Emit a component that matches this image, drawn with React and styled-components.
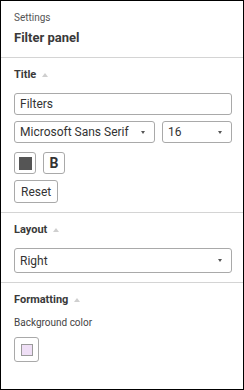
import React, { useState } from "react";
import styled, { createGlobalStyle } from "styled-components";

const GlobalStyle = createGlobalStyle`
  html, body {
    margin: 0;
    padding: 0;
    background: #ffffff;
  }
  * {
    box-sizing: border-box;
  }
`;

export default function App() {
  const [title, setTitle] = useState("Filters");
  const [font, setFont] = useState("Microsoft Sans Serif");
  const [size, setSize] = useState("16");
  const [layout, setLayout] = useState("Right");

  return (
    <>
      <GlobalStyle />
      <Panel>
        <Header>
          <Caption>Settings</Caption>
          <Heading>Filter panel</Heading>
        </Header>

        <Section>
          <SectionTitle>
            Title <Arrow />
          </SectionTitle>
          <TextInput value={title} onChange={(e) => setTitle(e.target.value)} />
          <Row>
            <Select value={font} onChange={setFont} width="141px" />
            <Select value={size} onChange={setSize} width="70px" />
          </Row>
          <Row gap="7px">
            <IconButton>
              <Swatch color="#555555" />
            </IconButton>
            <IconButton>
              <Bold>B</Bold>
            </IconButton>
          </Row>
          <TextButton>Reset</TextButton>
        </Section>

        <Section>
          <SectionTitle>
            Layout <Arrow />
          </SectionTitle>
          <Select value={layout} onChange={setLayout} width="100%" tall />
        </Section>

        <Section last>
          <SectionTitle>
            Formatting <Arrow />
          </SectionTitle>
          <Label>Background color</Label>
          <IconButton big>
            <Swatch color="#efdff6" light />
          </IconButton>
        </Section>
      </Panel>
    </>
  );
}

function Select({ value, width, tall }) {
  return (
    <SelectBox style={{ width }} tall={tall ? 1 : 0}>
      <span>{value}</span>
      <Caret />
    </SelectBox>
  );
}

const Panel = styled.div`
  width: 244px;
  height: 390px;
  border: 1px solid #000;
  background: #fff;
  font-family: Roboto, "Liberation Sans", Arial, sans-serif;
  color: #333;
  overflow: hidden;
`;

const Header = styled.div`
  padding: 10px 11px 11px 13px;
  border-bottom: 1px solid #d4d4d4;
`;

const Caption = styled.div`
  font-size: 10px;
  line-height: 13px;
  color: #555;
`;

const Heading = styled.div`
  margin-top: 5px;
  font-size: 13px;
  line-height: 17px;
  font-weight: 700;
  color: #3a3a3a;
`;

const Section = styled.div`
  padding: 10px 11px 9px 13px;
  border-bottom: ${(p) => (p.last ? "none" : "1px solid #d4d4d4")};
  display: flex;
  flex-direction: column;
  align-items: flex-start;
`;

const SectionTitle = styled.div`
  display: flex;
  align-items: center;
  gap: 6px;
  font-size: 11px;
  line-height: 14px;
  font-weight: 700;
  color: #3a3a3a;
  margin-bottom: 11px;
`;

const Arrow = styled.span`
  width: 0;
  height: 0;
  border-left: 3px solid transparent;
  border-right: 3px solid transparent;
  border-bottom: 4px solid #cfcfcf;
`;

const TextInput = styled.input`
  width: 100%;
  height: 22px;
  border: 1px solid #a9a9a9;
  border-radius: 3px;
  padding: 0 5px;
  font-family: inherit;
  font-size: 12px;
  color: #333;
  outline: none;
`;

const Row = styled.div`
  display: flex;
  gap: ${(p) => p.gap || "7px"};
  margin-top: ${(p) => (p.gap ? "9px" : "6px")};
  width: 100%;
`;

const SelectBox = styled.div`
  height: ${(p) => (p.tall ? "25px" : "22px")};
  border: 1px solid #a9a9a9;
  border-radius: 3px;
  padding: 0 9px 0 5px;
  display: flex;
  align-items: center;
  justify-content: space-between;
  font-size: 12px;
  color: #333;
  white-space: nowrap;
  overflow: hidden;
`;

const Caret = styled.span`
  flex: none;
  width: 0;
  height: 0;
  border-left: 2.5px solid transparent;
  border-right: 2.5px solid transparent;
  border-top: 3px solid #555;
`;

const IconButton = styled.button`
  width: ${(p) => (p.big ? "25px" : "22px")};
  height: ${(p) => (p.big ? "25px" : "22px")};
  margin-top: ${(p) => (p.big ? "8px" : "0")};
  padding: 0;
  border: 1px solid #a9a9a9;
  border-radius: 3px;
  background: #fff;
  display: flex;
  align-items: center;
  justify-content: center;
`;

const Swatch = styled.span`
  width: ${(p) => (p.light ? "12px" : "13px")};
  height: ${(p) => (p.light ? "12px" : "13px")};
  background: ${(p) => p.color};
  border: 1px solid ${(p) => (p.light ? "#9a9a9a" : "#555")};
`;

const Bold = styled.span`
  font-family: Roboto, "Liberation Sans", Arial, sans-serif;
  font-weight: 700;
  font-size: 14px;
  color: #333;
`;

const TextButton = styled.button`
  margin-top: 6px;
  height: 23px;
  padding: 0 6px;
  border: 1px solid #a9a9a9;
  border-radius: 3px;
  background: #fff;
  font-family: Roboto, "Liberation Sans", Arial, sans-serif;
  font-size: 12px;
  color: #333;
`;

const Label = styled.div`
  font-size: 10px;
  line-height: 13px;
  color: #444;
  margin-top: -2px;
`;
